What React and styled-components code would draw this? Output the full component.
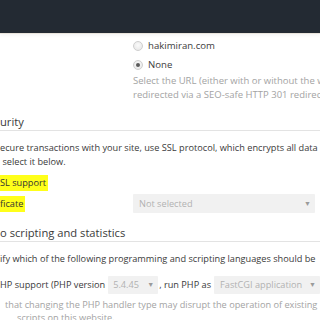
import React from "react";
import styled, { createGlobalStyle } from "styled-components";

const Global = createGlobalStyle`
  html, body { margin: 0; padding: 0; background: #fff; }
  body { font-family: "Open Sans", "Liberation Sans", sans-serif; width: 320px; height: 320px; overflow: hidden; }
`;

const Page = styled.div`
  width: 320px;
  height: 320px;
  overflow: hidden;
  display: flex;
  flex-direction: column;
  font-size: 9.2px;
  line-height: 14px;
  color: #3a3a3a;
  white-space: nowrap;
`;

const TopBar = styled.div`
  height: 33px;
  flex: none;
  background: #232a33;
  box-shadow: 0 1px 0 #e9e4dc, 0 3px 3px rgba(0, 0, 0, 0.04);
`;

const FieldColumn = styled.div`
  padding-left: 133px;
  padding-top: 6px;
  display: flex;
  flex-direction: column;
`;

const RadioRow = styled.label`
  display: flex;
  align-items: center;
  gap: 5px;
  height: 14px;
  margin-bottom: ${(p) => p.$gap || 0}px;
  font-size: 9.6px;
  color: #3c3c3c;
`;

const Radio = styled.span`
  width: 8px;
  height: 8px;
  border-radius: 50%;
  border: 1px solid #cfcfcf;
  background: radial-gradient(circle at 50% 40%, #fafafa, #e4e4e4);
  display: flex;
  align-items: center;
  justify-content: center;
  &::after {
    content: "";
    width: 4px;
    height: 4px;
    border-radius: 50%;
    background: ${(p) => (p.$checked ? "#5a5a5a" : "transparent")};
  }
`;

const Hint = styled.div`
  margin-top: 2px;
  font-size: 9.5px;
  color: #a3a3a3;
  line-height: 14px;
`;

const Heading = styled.h2`
  margin: ${(p) => p.$top}px 0 0;
  font-size: 11.2px;
  font-weight: 400;
  line-height: 16px;
  color: #3a3a3a;
  border-bottom: 1px solid #e3e3e3;
`;

const Para = styled.p`
  margin: ${(p) => p.$top}px 0 0;
  font-size: 9.2px;
  line-height: 13.5px;
  color: #3a3a3a;
  white-space: pre;
`;

const Row = styled.div`
  display: grid;
  grid-template-columns: 133px 182px;
  align-items: center;
  margin-top: ${(p) => p.$top}px;
  height: ${(p) => p.$h || 14}px;
`;

const Marked = styled.span`
  background: #ffff1a;
  color: #333;
  padding: 1px 2px 1px 0;
  justify-self: start;
`;

const Select = styled.div`
  display: flex;
  align-items: center;
  justify-content: space-between;
  height: ${(p) => p.$h || 19}px;
  width: ${(p) => p.$w}px;
  padding: 0 4px 0 ${(p) => p.$pl || 6}px;
  box-sizing: border-box;
  background: #f1f1f1;
  border-radius: 1px;
  color: #b2b2b2;
  font-size: 9.2px;
  flex: none;
`;

const Caret = styled.span`
  font-size: 7px;
  color: #9a9a9a;
`;

const InlineRow = styled.div`
  display: flex;
  align-items: center;
  margin-top: 10px;
  height: 18px;
  font-size: 9.2px;
  color: #3a3a3a;
`;

const InlineText = styled.span`
  padding: 0 ${(p) => p.$r || 0}px 0 ${(p) => p.$l || 0}px;
`;

const Note = styled.div`
  margin-top: ${(p) => p.$top || 0}px;
  color: #a3a3a3;
  font-size: 9.2px;
  line-height: 13.5px;
  padding-left: ${(p) => p.$indent || 0}px;
`;

export default function App() {
  return (
    <>
      <Global />
      <Page>
        <TopBar />
        <FieldColumn>
          <RadioRow $gap={5}>
            <Radio />
            hakimiran.com
          </RadioRow>
          <RadioRow>
            <Radio $checked />
            None
          </RadioRow>
          <Hint>
            Select the URL (either with or without the www. prefix) to which
            <br />
            redirected via a SEO-safe HTTP 301 redirect.
          </Hint>
        </FieldColumn>

        <Heading $top={12}>urity</Heading>
        <Para $top={10}>
          {"ecure transactions with your site, use SSL protocol, which encrypts all data\n select it below."}
        </Para>
        <Row $top={7}>
          <Marked>SL support</Marked>
        </Row>
        <Row $top={5} $h={19}>
          <Marked>ficate</Marked>
          <Select $w={182}>
            Not selected
            <Caret>▼</Caret>
          </Select>
        </Row>

        <Heading $top={12}>o scripting and statistics</Heading>
        <Para $top={10}>
          ify which of the following programming and scripting languages should be
        </Para>
        <InlineRow>
          <InlineText $r={3}>HP support (PHP version</InlineText>
          <Select $w={50} $h={18} $pl={5}>
            5.4.45
            <Caret>▼</Caret>
          </Select>
          <InlineText $l={1} $r={3}>, run PHP as</InlineText>
          <Select $w={106} $h={18}>
            FastCGI application
            <Caret>▼</Caret>
          </Select>
        </InlineRow>
        <Note $top={4} $indent={5}>
          that changing the PHP handler type may disrupt the operation of existing
        </Note>
        <Note $indent={17}>scripts on this website.</Note>
      </Page>
    </>
  );
}
